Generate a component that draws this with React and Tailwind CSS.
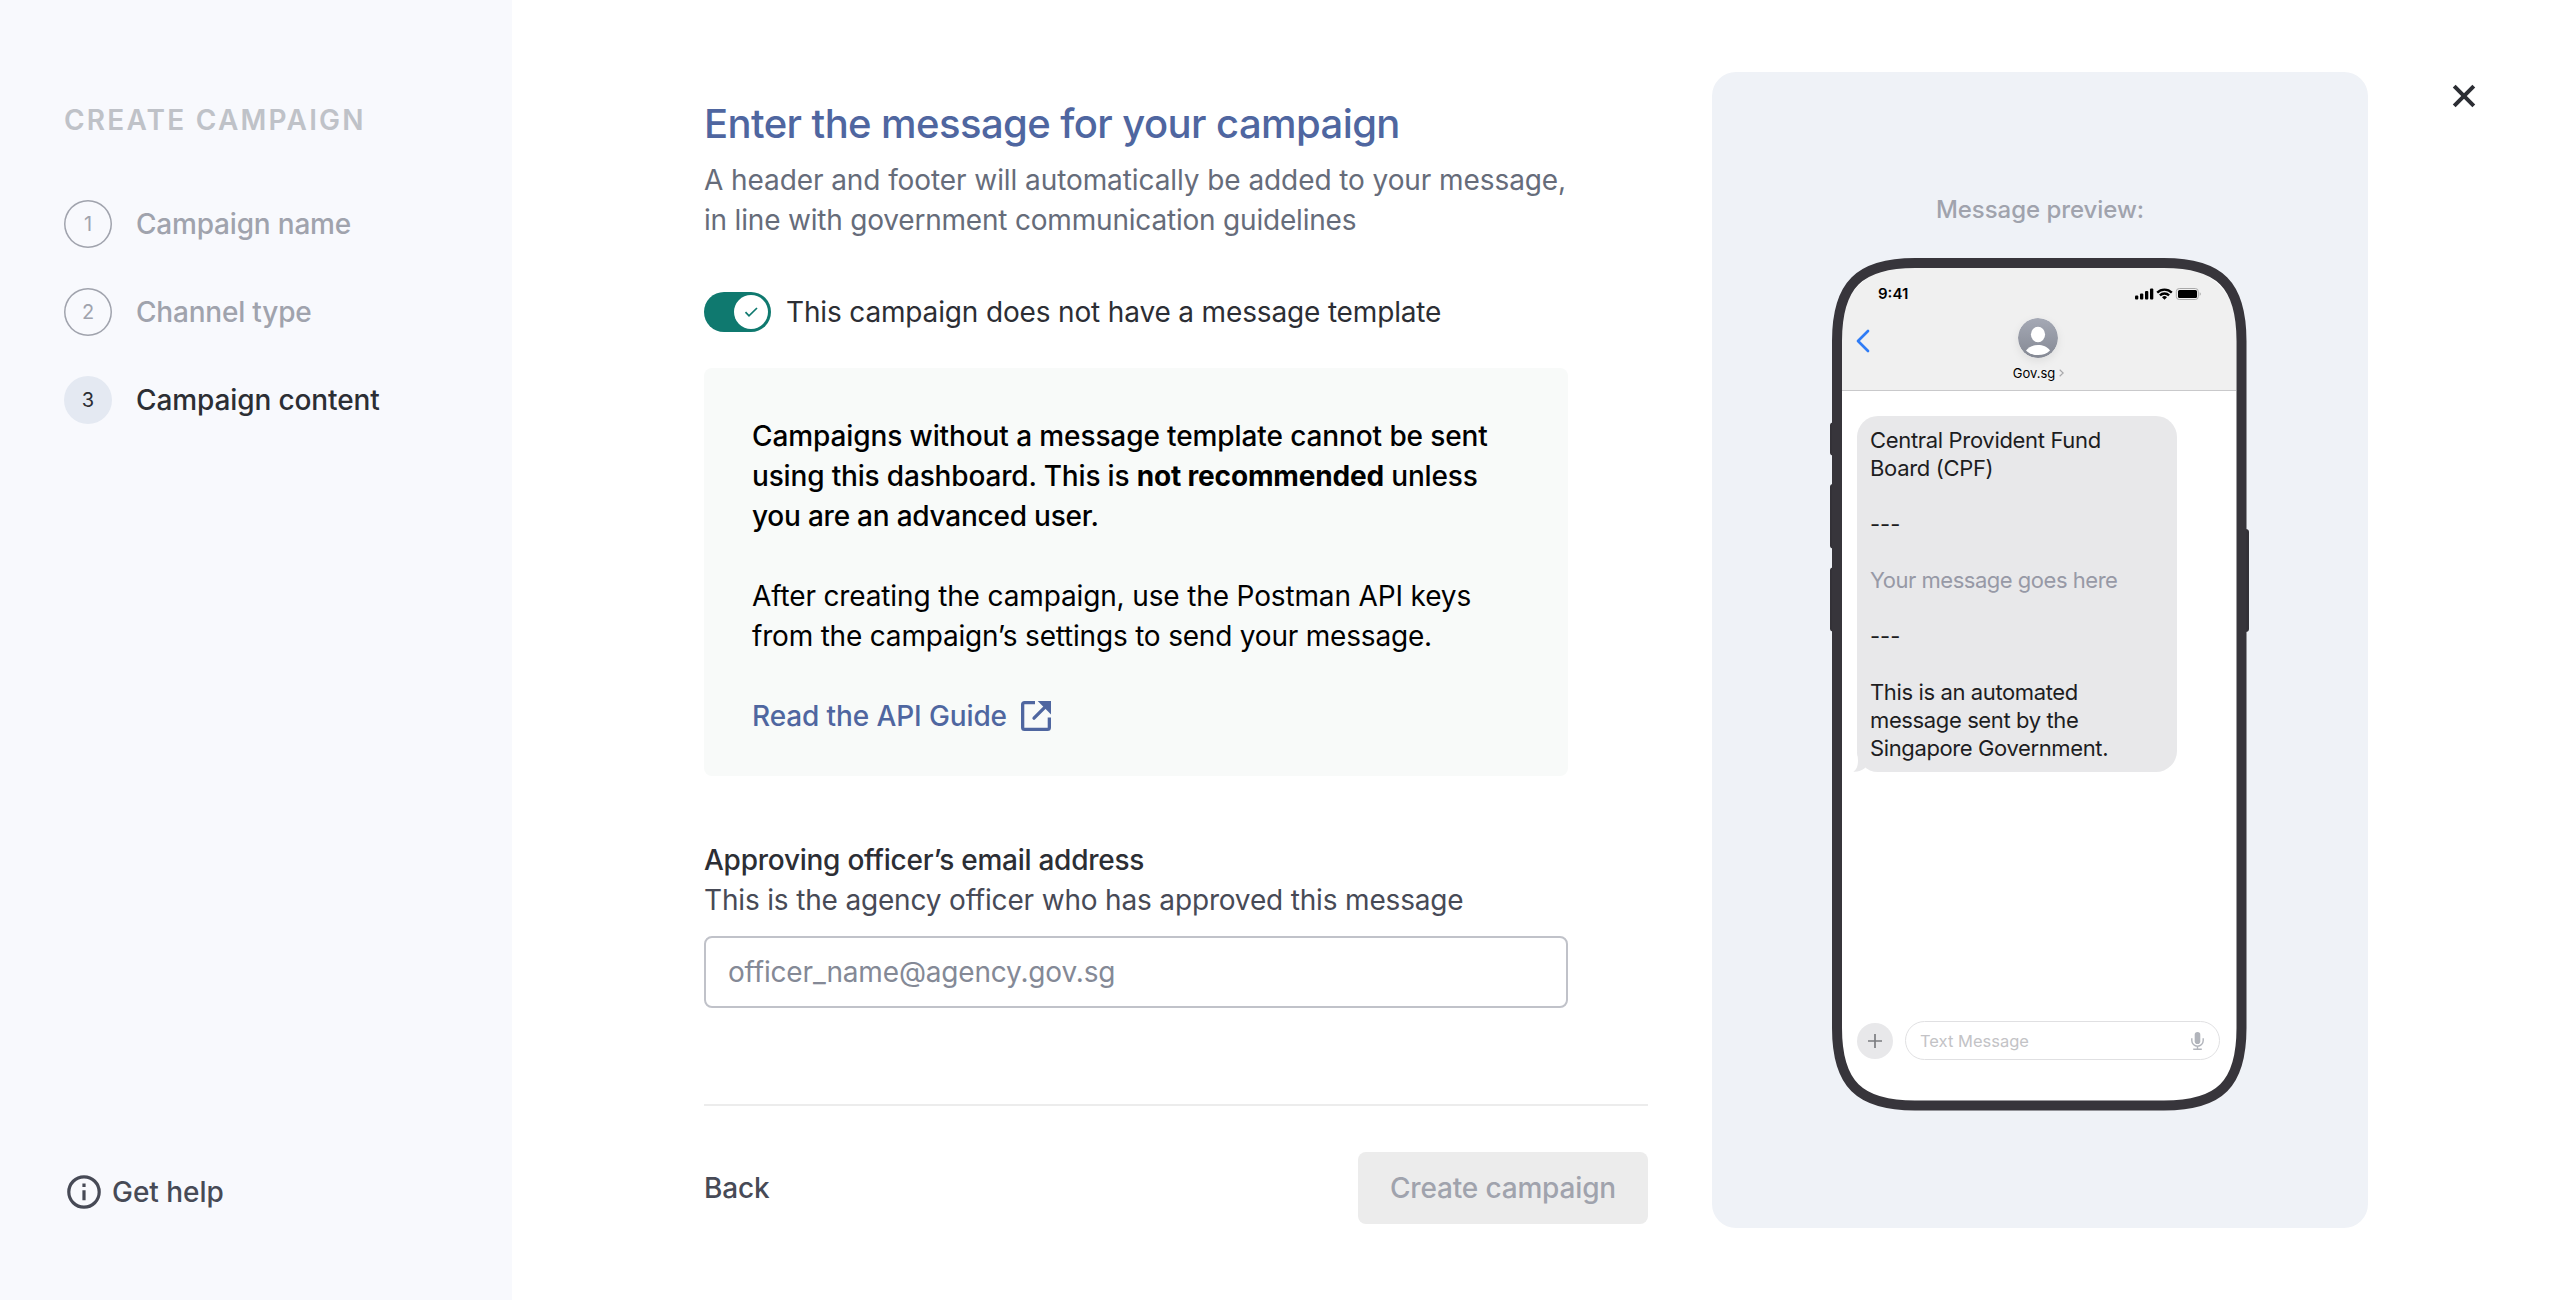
import React from "react";

const steps = [
  { n: 1, label: "Campaign name" },
  { n: 2, label: "Channel type" },
  { n: 3, label: "Campaign content", active: true },
];

function Sidebar() {
  return (
    <aside className="flex w-[512px] shrink-0 flex-col justify-between bg-[#f8f9fd] px-16 pt-[100px] pb-[88px]">
      <div>
        <h2 className="text-[28px] leading-[40px] font-semibold tracking-[0.079em] whitespace-nowrap text-[#bfc2c8]">CREATE CAMPAIGN</h2>
        <ol className="mt-[60px] flex flex-col gap-10">
          {steps.map((s) => (
            <li key={s.n} className="flex items-center gap-6">
              <span
                className={
                  s.active
                    ? "flex size-12 items-center justify-center rounded-full bg-[#e4e9f2] text-[20px] text-[#2c2e34]"
                    : "flex size-12 items-center justify-center rounded-full text-[20px] text-[#a0a3ad] inset-ring-[1.5px] inset-ring-[#a0a3ad]"
                }
              >
                {s.n}
              </span>
              <span
                className={
                  s.active
                    ? "text-[28px] leading-[40px] font-medium tracking-[-0.004em] text-[#2c2e34]"
                    : "text-[28px] leading-[40px] font-medium tracking-[-0.007em] text-[#a0a3ad]"
                }
              >
                {s.label}
              </span>
            </li>
          ))}
        </ol>
      </div>
      <a className="flex items-center gap-[11px] pl-[3px] text-[28px] leading-[40px] font-medium tracking-[-0.001em] text-[#474a56]">
        <svg className="size-[34px]" viewBox="0 0 34 34" fill="none" stroke="currentColor" strokeWidth="3.2">
          <circle cx="17" cy="17" r="15.2" />
          <path d="M17 15.2v10M17 8.6v3.3" />
        </svg>
        Get help
      </a>
    </aside>
  );
}

function Form() {
  return (
    <main className="ml-48 flex w-[944px] shrink-0 flex-col pt-[100px] text-[28px] leading-[40px] tracking-[-0.006em]">
      <h1 className="text-[40px] leading-[48px] font-medium tracking-[-0.0145em] whitespace-nowrap text-[#4f66a0]">Enter the message for your campaign</h1>
      <p className="mt-3 whitespace-nowrap text-[#666c7a]">
        <span className="tracking-[-0.003em]">A header and footer will automatically be added to your message,</span>
        <br />
        <span className="tracking-[-0.007em]">in line with government communication guidelines</span>
      </p>
      <div className="mt-[52px] flex items-center gap-[15px] text-[#2c2e34]">
        <span className="flex h-10 w-[67px] items-center justify-end rounded-full bg-[#0f796f] px-[3px]">
          <span className="flex size-[34px] items-center justify-center rounded-full bg-white">
            <svg className="h-3 w-[14px]" viewBox="0 0 14 12" fill="none" stroke="#0f796f" strokeWidth="1.7">
              <path d="M1.5 6.200 5 9.900 13 2" />
            </svg>
          </span>
        </span>
        <span className="whitespace-nowrap tracking-[-0.0055em]">This campaign does not have a message template</span>
      </div>
      <section className="mt-9 h-[408px] w-[864px] rounded-lg bg-[#f8faf9] px-12 pt-12 whitespace-nowrap text-black">
        <p className="font-medium">
          <span className="tracking-[-0.0037em]">Campaigns without a message template cannot be sent</span>
          <br />
          using this dashboard. This is <b className="font-bold">not recommended</b> unless
          <br />
          <span className="tracking-[-0.008em]">you are an advanced user.</span>
        </p>
        <p className="mt-10">
          <span className="tracking-[-0.005em]">After creating the campaign, use the Postman API keys</span>
          <br />
          <span className="tracking-[-0.007em]">from the campaign’s settings to send your message.</span>
        </p>
        <a className="mt-10 flex items-center gap-[14px] font-medium tracking-[-0.004em] text-[#4f66a0]">
          Read the API Guide
          <svg className="size-[30px]" viewBox="0 0 30 30" fill="none" stroke="currentColor" strokeWidth="3.3">
            <path d="M14 1.650H3.500Q1.650 1.650 1.650 3.500V26.500Q1.650 28.350 3.500 28.350H26.500Q28.350 28.350 28.350 26.500V16.500" />
            <path d="M13 17.200 25 5.200" strokeLinecap="round" />
            <path d="M16.700 0H30V13.400Z" fill="currentColor" stroke="none" />
          </svg>
        </a>
      </section>
      <label className="mt-16 font-medium tracking-[-0.009em] text-[#2c2e34]">Approving officer’s email address</label>
      <p className="text-[#474a56]">This is the agency officer who has approved this message</p>
      <input
        className="mt-4 h-[72px] w-[864px] rounded-lg border-2 border-[#c0c2c9] bg-white px-[22px] tracking-[-0.006em] placeholder:text-[#848996]"
        placeholder="officer_name@agency.gov.sg"
      />
      <div className="mt-24 flex items-center justify-between border-t-2 border-[#ececec] pt-[46px] font-medium">
        <span className="text-[#474a56]">Back</span>
        <button className="h-[72px] w-[290px] rounded-lg bg-[#ececec] tracking-[-0.006em] text-[#a0a3ad]">Create campaign</button>
      </div>
    </main>
  );
}

function StatusIcons() {
  return (
    <svg className="h-3 w-[67px]" viewBox="0 0 67 12">
      <g fill="#000">
        <rect x="0" y="7.500" width="3.300" height="4" rx="1" />
        <rect x="5" y="5.500" width="3.300" height="6" rx="1" />
        <rect x="10" y="3" width="3.300" height="8.500" rx="1" />
        <rect x="15" y="0.500" width="3.300" height="11" rx="1" />
      </g>
      <g fill="none" stroke="#000" strokeWidth="2.300">
        <path d="M22.200 4.600a10.300 10.300 0 0 1 14.600 0" />
        <path d="M24.900 7.400a6.500 6.500 0 0 1 9.200 0" />
      </g>
      <path d="M29.500 11.800 27 9.300a3.600 3.600 0 0 1 5 0Z" fill="#000" />
      <rect x="41.300" y="0.500" width="22" height="11" rx="3" fill="none" stroke="#a9a9a9" />
      <rect x="43" y="2" width="19" height="8" rx="1.500" fill="#000" />
      <path d="M64.700 4.200v3.600c1.500-.7 1.500-2.900 0-3.600Z" fill="#a9a9a9" />
    </svg>
  );
}

function Phone() {
  return (
    <div className="relative mt-8 h-[853px] w-[416px] px-[10px] py-[10px]">
      <svg className="pointer-events-none absolute top-0 -left-[3px] h-[853px] w-[421px]" viewBox="-3 0 421 853">
        <path
          d="M2 164.500h-1q-3 0-3 3v27q0 3 3 3h1zM2 226h-1q-3 0-3 3v58.500q0 3 3 3h1zM2 309.500h-1q-3 0-3 3v58q0 3 3 3h1zM412 271h1.500q3.500 0 3.500 3v97q0 3-3.500 3h-1.500z"
          fill="#333137"
        />
        <path d="M5 83C5 32 28 5 83 5H332C387 5 409 32 409 83V769C409 820 387 847 332 847H83C28 847 5 820 5 769Z" fill="#fff" />
      </svg>
      <div className="relative flex h-[833px] w-[394px] flex-col overflow-hidden rounded-[58px] bg-white text-[22px] leading-[28px] text-[#1d1d1f]">
        <header className="flex h-[123px] shrink-0 flex-col border-b border-[#c9c9cb] bg-[#f0f0f0] pt-[18px]">
          <div className="flex h-4 items-center justify-between pr-[34px] pl-9 text-black">
            <span className="text-[15px] leading-4 font-semibold">9:41</span>
            <StatusIcons />
          </div>
          <div className="mt-4 mr-[2px] grid h-10 grid-cols-3 items-center">
            <svg className="mt-[5px] ml-[14px] h-6 w-4" viewBox="0 0 16 24" fill="none" stroke="#2f7cf6" strokeWidth="2.700" strokeLinecap="round" strokeLinejoin="round">
              <path d="M12 2 2 12 12 22" />
            </svg>
            <svg className="mx-auto size-10 rounded-full shadow-[0_3px_10px_rgba(0,0,0,0.08)]" viewBox="0 0 40 40">
              <defs>
                <linearGradient id="avatar" x1="0" y1="0" x2="0" y2="1">
                  <stop offset="0" stopColor="#a5a9b5" />
                  <stop offset="1" stopColor="#858994" />
                </linearGradient>
              </defs>
              <circle cx="20" cy="20" r="20" fill="url(#avatar)" />
              <ellipse cx="20" cy="16.500" rx="7.100" ry="7.700" fill="#fff" />
              <path d="M8 32.500C11 28.500 15 27 20 27s9 1.500 12 5.500C29 35.500 25 37 20 37s-9-1.500-12-4.500Z" fill="#fff" />
            </svg>
          </div>
          <div className="mt-[7px] mr-px flex items-center justify-center gap-1 text-[13px] leading-4 text-black">
            Gov.sg
            <svg className="h-2 w-[5px]" viewBox="0 0 5 8" fill="none" stroke="#a8a8ab" strokeWidth="1.200">
              <path d="M.7.7 4.200 4 .7 7.300" />
            </svg>
          </div>
        </header>
        <div className="relative mt-[25px] ml-[15px] h-[356px] w-[320px] rounded-[21px] bg-[#e8e8ea] pt-[10px] pl-[13px] whitespace-pre">
          <svg className="absolute bottom-0 -left-1 h-5 w-4" viewBox="0 0 16 20">
            <path d="M4 0C5.500 8 6 16 .3 19.800 5 20 9 18.500 12 16V0Z" fill="#e8e8ea" />
          </svg>
          <div className="relative">
            <span className="tracking-[-0.33px]">{"Central Provident Fund\nBoard (CPF)"}</span>
            {"\n\n---\n\n"}
            <span className="tracking-[-0.48px] text-[#9799a6]">Your message goes here</span>
            {"\n\n---\n\n"}
            <span className="tracking-[-0.38px]">{"This is an automated\nmessage sent by the\nSingapore Government."}</span>
          </div>
        </div>
        <div className="mt-auto mb-[41px] flex items-center gap-3 pl-[15px]">
          <span className="flex size-9 items-center justify-center rounded-full bg-[#e8e8ea]">
            <svg className="size-[14px]" viewBox="0 0 14 14" stroke="#7b7c80" strokeWidth="1.700">
              <path d="M7 0v14M0 7h14" />
            </svg>
          </span>
          <div className="flex h-[39px] w-[315px] items-center justify-between rounded-full border border-[#e0e0e2] pr-[15px] pl-[14px] text-[16.500px] text-[#c3c3c6]">
            Text Message
            <svg className="h-[18px] w-[13px]" viewBox="0 0 13 18" fill="none" stroke="#b1b4bb" strokeWidth="1.400">
              <rect x="3.700" y="0" width="5.600" height="12" rx="2.800" fill="#b1b4bb" stroke="none" />
              <path d="M.8 6.300v2.200a5.700 5.700 0 0 0 11.400 0V6.300M6.500 14v3M2.200 17.200h8.600" />
            </svg>
          </div>
        </div>
      </div>
      <svg className="pointer-events-none absolute top-0 left-0 h-[853px] w-[415px]" viewBox="0 0 415 853">
        <path
          d="M5 83C5 27 27 5 83 5H332C388 5 409.500 27 409.500 83V770C409.500 826 388 847.500 332 847.500H83C27 847.500 5 826 5 770Z"
          fill="none"
          stroke="#37353b"
          strokeWidth="10"
        />
      </svg>
    </div>
  );
}

export default function App() {
  return (
    <div className="flex h-[1300px] w-[2560px] overflow-hidden bg-white font-['Inter',sans-serif]">
      <Sidebar />
      <Form />
      <section className="mt-[72px] ml-16 flex h-[1156px] w-[656px] shrink-0 flex-col items-center rounded-3xl bg-[#eff2f7] pt-[122px]">
        <p className="text-[24px] leading-[32px] font-medium tracking-[-0.002em] text-[#a0a3ad]">Message preview:</p>
        <Phone />
      </section>
      <button aria-label="Close" className="mt-[84px] ml-[84px] size-6">
        <svg className="size-6" viewBox="0 0 24 24" stroke="#2c2e34" strokeWidth="4">
          <path d="M2.200 2.200 21.800 21.800M21.800 2.200 2.200 21.800" />
        </svg>
      </button>
    </div>
  );
}
